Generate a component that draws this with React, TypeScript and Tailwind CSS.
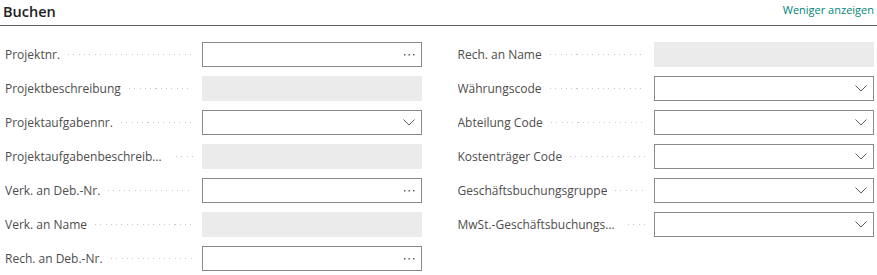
import React from 'react';

type Field = {
  label: string;
  kind: 'lookup' | 'select' | 'readonly';
};

const leftFields: Field[] = [
  { label: 'Projektnr.', kind: 'lookup' },
  { label: 'Projektbeschreibung', kind: 'readonly' },
  { label: 'Projektaufgabennr.', kind: 'select' },
  { label: 'Projektaufgabenbeschreibung', kind: 'readonly' },
  { label: 'Verk. an Deb.-Nr.', kind: 'lookup' },
  { label: 'Verk. an Name', kind: 'readonly' },
  { label: 'Rech. an Deb.-Nr.', kind: 'lookup' },
];

const rightFields: Field[] = [
  { label: 'Rech. an Name', kind: 'readonly' },
  { label: 'Währungscode', kind: 'select' },
  { label: 'Abteilung Code', kind: 'select' },
  { label: 'Kostenträger Code', kind: 'select' },
  { label: 'Geschäftsbuchungsgruppe', kind: 'select' },
  { label: 'MwSt.-Geschäftsbuchungsgruppe', kind: 'select' },
];

const Chevron = () => (
  <svg width="12" height="7" viewBox="0 0 12 7" className="shrink-0">
    <polyline points="0.5,0.5 6,6 11.5,0.5" fill="none" stroke="#605e5c" strokeWidth="1" />
  </svg>
);

const Ellipsis = () => (
  <svg width="11" height="2" viewBox="0 0 11 2" className="shrink-0">
    <rect x="0" y="0" width="1.5" height="1.5" fill="#605e5c" />
    <rect x="4.5" y="0" width="1.5" height="1.5" fill="#605e5c" />
    <rect x="9" y="0" width="1.5" height="1.5" fill="#605e5c" />
  </svg>
);

const FieldRow: React.FC<{ field: Field }> = ({ field }) => (
  <div className="flex items-center h-[25px]">
    <div className="flex-1 min-w-0 flex items-center pr-[9px]">
      <span className="truncate text-[12px] text-[#4d4d4d]">{field.label}</span>
      <div className="flex-1 min-w-[17px] ml-[8px] h-px bg-[repeating-linear-gradient(to_right,#c8c8c8_0_1px,transparent_1px_5.3px)]" />
    </div>
    {field.kind === 'readonly' ? (
      <div className="w-[220px] h-[25px] bg-[#ebebeb]" />
    ) : (
      <div className="w-[220px] h-[25px] border border-[#8a8886] bg-white flex items-center justify-end pr-[6px]">
        {field.kind === 'select' ? <Chevron /> : <Ellipsis />}
      </div>
    )}
  </div>
);

export default function App() {
  return (
    <div className="w-[877px] h-[275px] bg-white font-['Segoe_UI','Open_Sans',sans-serif]">
      <div className="flex items-end justify-between pl-[3px] pr-[3px] pt-[2px] pb-[3px] border-b border-[#605e5c] h-[26px]">
        <h2 className="text-[14.5px] font-semibold text-[#212121] leading-[20px]">Buchen</h2>
        <span className="text-[11px] text-[#00857a] leading-[20px] pb-[2px]">Weniger anzeigen</span>
      </div>
      <div className="grid grid-cols-2 gap-x-[36px] pl-[5px] pr-[3px] pt-[16px]">
        <div className="flex flex-col gap-[9px]">
          {leftFields.map((f) => (
            <FieldRow key={f.label} field={f} />
          ))}
        </div>
        <div className="flex flex-col gap-[9px]">
          {rightFields.map((f) => (
            <FieldRow key={f.label} field={f} />
          ))}
        </div>
      </div>
    </div>
  );
}
